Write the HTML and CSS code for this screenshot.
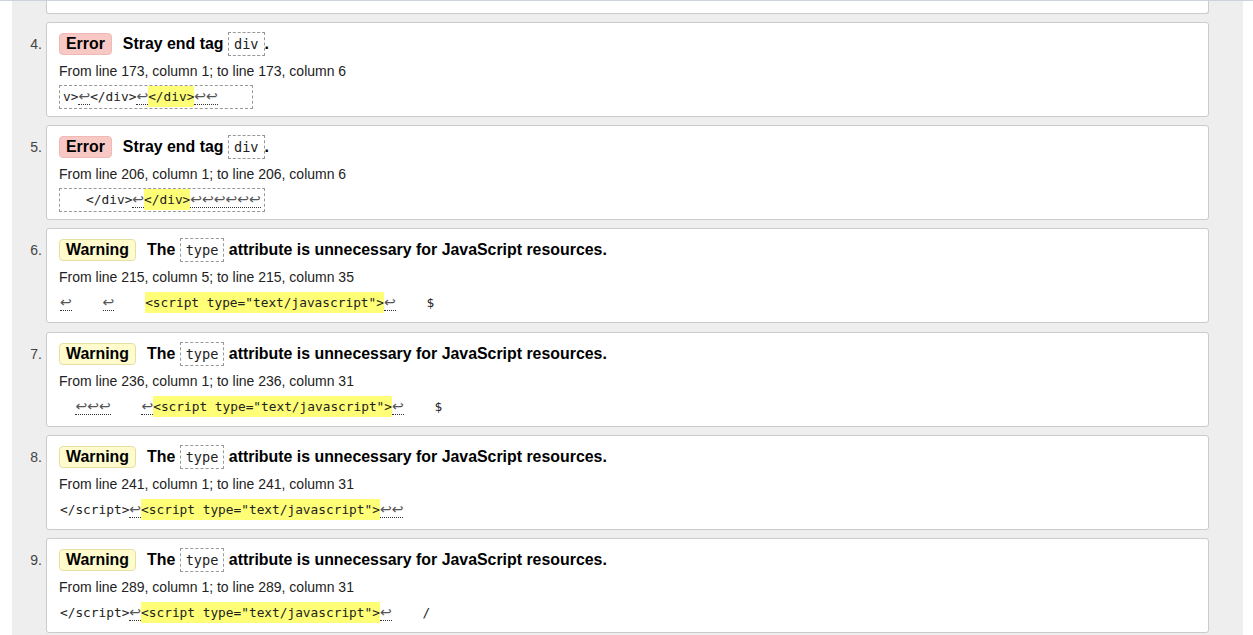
FILE: index.html
```html
<!DOCTYPE html>
<html lang="en">
<head>
<meta charset="utf-8">
<title>Validation results</title>
<link rel="stylesheet" href="styles.css">
</head>
<body>
<div class="topline">
  <div class="page">
    <ol class="messages">
      <li class="msg msg-tail"><span class="num"></span><div class="card card-tail"></div></li>

      <li class="msg">
        <span class="num">4.</span>
        <div class="card">
          <p class="head"><strong class="badge badge-error">Error</strong>Stray end tag <code class="ident">div</code>.</p>
          <p class="loc">From line 173, column 1; to line 173, column 6</p>
          <div class="ex-row"><code class="extract boxed">v&gt;<span class="nl">↩</span>&lt;/div&gt;<span class="nl">↩</span><mark>&lt;/div&gt;</mark><span class="nl">↩↩</span>    </code></div>
        </div>
      </li>

      <li class="msg">
        <span class="num">5.</span>
        <div class="card">
          <p class="head"><strong class="badge badge-error">Error</strong>Stray end tag <code class="ident">div</code>.</p>
          <p class="loc">From line 206, column 1; to line 206, column 6</p>
          <div class="ex-row"><code class="extract boxed">   &lt;/div&gt;<span class="nl">↩</span><mark>&lt;/div&gt;</mark><span class="nl">↩↩↩↩↩↩</span></code></div>
        </div>
      </li>

      <li class="msg">
        <span class="num">6.</span>
        <div class="card">
          <p class="head"><strong class="badge badge-warning">Warning</strong>The <code class="ident">type</code> attribute is unnecessary for JavaScript resources.</p>
          <p class="loc">From line 215, column 5; to line 215, column 35</p>
          <div class="ex-row"><code class="extract"><span class="nl">↩</span>    <span class="nl">↩</span>    <mark>&lt;script type="text/javascript"&gt;</mark><span class="nl">↩</span>    $</code></div>
        </div>
      </li>

      <li class="msg">
        <span class="num">7.</span>
        <div class="card">
          <p class="head"><strong class="badge badge-warning">Warning</strong>The <code class="ident">type</code> attribute is unnecessary for JavaScript resources.</p>
          <p class="loc">From line 236, column 1; to line 236, column 31</p>
          <div class="ex-row"><code class="extract">  <span class="nl">↩↩↩</span>    <span class="nl">↩</span><mark>&lt;script type="text/javascript"&gt;</mark><span class="nl">↩</span>    $</code></div>
        </div>
      </li>

      <li class="msg">
        <span class="num">8.</span>
        <div class="card">
          <p class="head"><strong class="badge badge-warning">Warning</strong>The <code class="ident">type</code> attribute is unnecessary for JavaScript resources.</p>
          <p class="loc">From line 241, column 1; to line 241, column 31</p>
          <div class="ex-row"><code class="extract">&lt;/script&gt;<span class="nl">↩</span><mark>&lt;script type="text/javascript"&gt;</mark><span class="nl">↩↩</span></code></div>
        </div>
      </li>

      <li class="msg">
        <span class="num">9.</span>
        <div class="card">
          <p class="head"><strong class="badge badge-warning">Warning</strong>The <code class="ident">type</code> attribute is unnecessary for JavaScript resources.</p>
          <p class="loc">From line 289, column 1; to line 289, column 31</p>
          <div class="ex-row"><code class="extract">&lt;/script&gt;<span class="nl">↩</span><mark>&lt;script type="text/javascript"&gt;</mark><span class="nl">↩</span>    /</code></div>
        </div>
      </li>
    </ol>
  </div>
</div>
</body>
</html>
```

FILE: styles.css
```css
html, body {
  margin: 0;
  padding: 0;
  background: #fff;
}

body {
  font-family: "Liberation Sans", Arial, sans-serif;
  color: #222;
  height: 635px;
  overflow: hidden;
}

.topline {
  border-top: 1px solid #cdd3db;
}

.page {
  margin: 0 10px 0 12px;
  background: #eeeeee;
  min-height: 640px;
}

.messages {
  list-style: none;
  margin: 0;
  padding: 0 34px 0 0;
}

.msg {
  display: flex;
  align-items: flex-start;
  margin-bottom: 8.2px;
}

.num {
  flex: 0 0 34px;
  box-sizing: border-box;
  padding-right: 4px;
  margin-top: 10px;
  text-align: right;
  font-size: 14px;
  line-height: 24px;
  color: #444;
}

.card {
  flex: 1;
  background: #fff;
  border: 1px solid #cbcbcb;
  border-radius: 3px;
  padding: 9px 12px 7px;
}

.card-tail {
  height: 12px;
  padding: 0;
  border-top: none;
  border-radius: 0 0 3px 3px;
}

.msg-tail {
  margin-bottom: 8px;
}

.head {
  margin: 0;
  font-size: 15.9px;
  font-weight: bold;
  line-height: 24px;
  color: #000;
  white-space: nowrap;
}

.badge {
  display: inline-block;
  vertical-align: top;
  margin-top: 1px;
  margin-right: 11px;
  padding: 0 6px;
  line-height: 20px;
  border-radius: 4px;
  border: 1px solid transparent;
}

.badge-error {
  background: #f8c8c5;
  border-color: #f0b9b5;
}

.badge-warning {
  background: #fffbcc;
  border-color: #e5dfa6;
}

.ident {
  display: inline-block;
  vertical-align: top;
  border: 1px dashed #999;
  padding: 0 5px;
  line-height: 22px;
  font-family: "DejaVu Sans Mono", monospace;
  font-size: 13.6px;
  font-weight: normal;
  color: #222;
}

.loc {
  margin: 4px 0 0;
  font-size: 14px;
  line-height: 22px;
  color: #222;
}

.ex-row {
  display: flex;
  margin-top: 3px;
}

.extract {
  display: block;
  white-space: pre;
  font-family: "DejaVu Sans Mono", monospace;
  font-size: 12.8px;
  line-height: 22px;
  color: #222;
  border: 1px dashed transparent;
  padding: 0;
}

.extract.boxed {
  border-color: #999;
  padding: 0 3px;
}

.extract mark {
  background: #ffff77;
  color: inherit;
  padding: 3px 0;
}

.nl {
  font-family: "DejaVu Sans", sans-serif;
  font-size: 14px;
  line-height: 1;
  color: #555;
  border-bottom: 1px dotted #333;
}
```
